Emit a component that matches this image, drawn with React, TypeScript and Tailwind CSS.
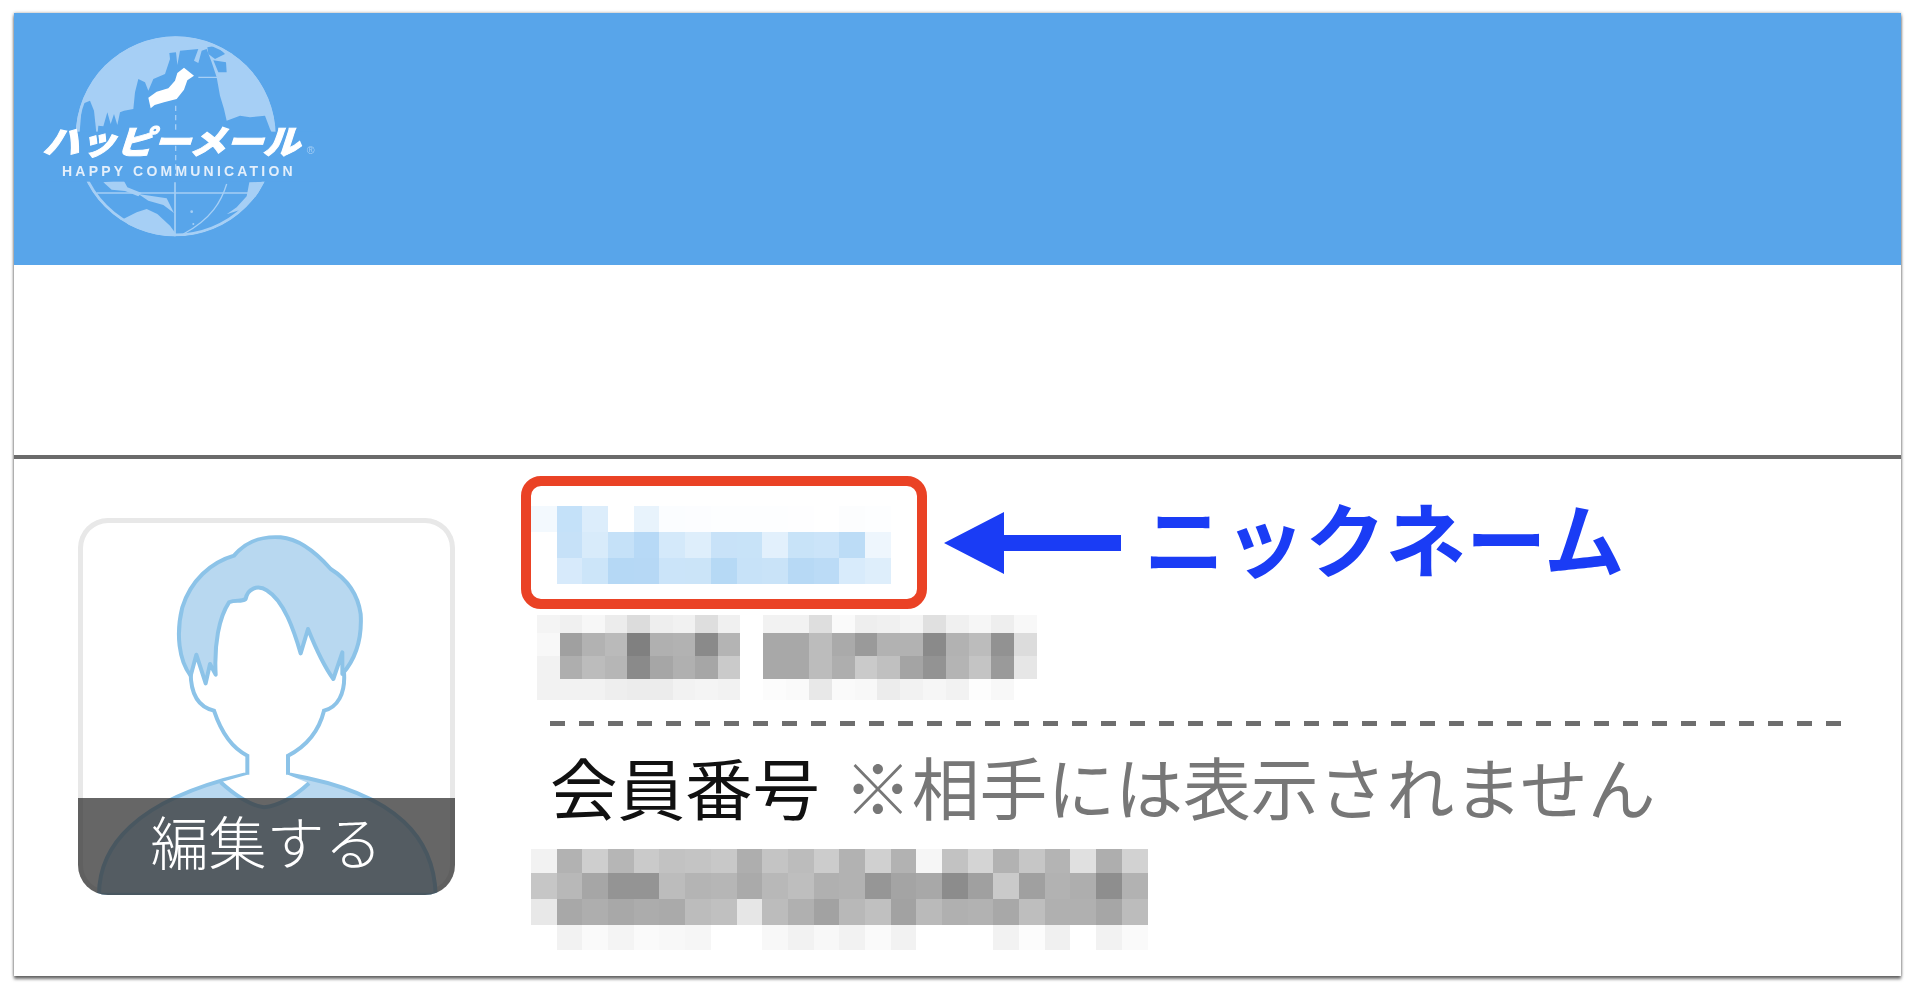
const blueRows = [
  ['#f3f9fe', '#c4e1f9', '#dcedfb', '#ffffff', '#e8f3fc', '#fbfdff', '#fcfdff', '#fdfeff', '#fdfeff', '#fdfeff', '#fefeff', '#ffffff', '#fcfdfe', '#fdfeff'],
  ['#ffffff', '#c6e1f8', '#d8ebfa', '#c5e1f8', '#b7d9f6', '#d4e9fa', '#deeefb', '#c8e2f8', '#c8e3f8', '#e2f0fc', '#c8e3f8', '#cbe4f9', '#bcdcf6', '#eef6fd'],
  ['#ffffff', '#d7eafb', '#cce5f9', '#b5d8f5', '#b6d8f5', '#cbe4f9', '#cbe4f8', '#b6d9f5', '#c7e2f8', '#c9e3f8', '#b7d9f5', '#bbdbf6', '#d8ebfb', '#deeefb'],
]

const grayRowsA = [
  ['#f4f4f4', '#f0f0f0', '#f7f7f7', '#ececec', '#dcdcdc', '#eeeeee', '#f1f1f1', '#dedede', '#f0f0f0'],
  ['#f8f8f8', '#a0a0a0', '#b2b2b2', '#bababa', '#808080', '#b0b0b0', '#b2b2b2', '#8a8a8a', '#b4b4b4'],
  ['#f2f2f2', '#aeaeae', '#bcbcbc', '#b6b6b6', '#8a8a8a', '#a6a6a6', '#b0b0b0', '#a6a6a6', '#cacaca'],
  ['#f2f2f2', '#f2f2f2', '#f2f2f2', '#eeeeee', '#ececec', '#ececec', '#f2f2f2', '#f4f4f4', '#f2f2f2'],
]

const grayRowsB = [
  ['#f2f2f2', '#f2f2f2', '#dedede', '#fafafa', '#eeeeee', '#f0f0f0', '#f4f4f4', '#e0e0e0', '#f0f0f0', '#f6f6f6', '#eeeeee', '#f8f8f8'],
  ['#a8a8a8', '#a8a8a8', '#bcbcbc', '#aaaaaa', '#9a9a9a', '#b2b2b2', '#b2b2b2', '#8a8a8a', '#b2b2b2', '#bcbcbc', '#929292', '#dcdcdc'],
  ['#a8a8a8', '#a8a8a8', '#bcbcbc', '#aeaeae', '#cacaca', '#c0c0c0', '#a4a4a4', '#939393', '#b4b4b4', '#c4c4c4', '#9a9a9a', '#e6e6e6'],
  ['#fcfcfc', '#fafafa', '#e8e8e8', '#fafafa', '#f8f8f8', '#ececec', '#f2f2f2', '#f6f6f6', '#f2f2f2', '#fdfdfd', '#f8f8f8', '#ffffff'],
]

const grayRowsC = [
  ['#f2f2f2', '#b2b2b2', '#cecece', '#b6b6b6', '#cacaca', '#c2c2c2', '#c4c4c4', '#c8c8c8', '#aeaeae', '#c4c4c4', '#bcbcbc', '#cccccc', '#b2b2b2', '#d0d0d0', '#b2b2b2', '#f6f6f6', '#c2c2c2', '#d4d4d4', '#b2b2b2', '#c6c6c6', '#b4b4b4', '#e0e0e0', '#aeaeae', '#d2d2d2'],
  ['#c6c6c6', '#b8b8b8', '#a6a6a6', '#949494', '#949494', '#bcbcbc', '#b4b4b4', '#b6b6b6', '#aaaaaa', '#b8b8b8', '#bebebe', '#b0b0b0', '#b2b2b2', '#969696', '#a4a4a4', '#a8a8a8', '#8c8c8c', '#a0a0a0', '#cacaca', '#a0a0a0', '#b2b2b2', '#aeaeae', '#8e8e8e', '#b2b2b2'],
  ['#e8e8e8', '#a8a8a8', '#aeaeae', '#a8a8a8', '#acacac', '#aaaaaa', '#bcbcbc', '#c0c0c0', '#e6e6e6', '#bcbcbc', '#b0b0b0', '#a2a2a2', '#b8b8b8', '#c0c0c0', '#a2a2a2', '#bababa', '#b0b0b0', '#b2b2b2', '#a8a8a8', '#bebebe', '#b0b0b0', '#b0b0b0', '#a6a6a6', '#bcbcbc'],
  ['#ffffff', '#f2f2f2', '#fafafa', '#f4f4f4', '#fafafa', '#f8f8f8', '#f6f6f6', '#ffffff', '#ffffff', '#f8f8f8', '#f2f2f2', '#f8f8f8', '#f2f2f2', '#fafafa', '#f2f2f2', '#ffffff', '#ffffff', '#ffffff', '#f2f2f2', '#fcfcfc', '#f0f0f0', '#ffffff', '#f2f2f2', '#fafafa'],
]

// a block of blurred-out text
function Mosaic({ rows, cell, heights }: { rows: string[][]; cell: number; heights: number[] }) {
  return (
    <div className="flex flex-col blur-[0.7px]">
      {rows.map((row, i) => (
        <div key={i} className="flex" style={{ height: heights[i] }}>
          {row.map((c, j) => (
            <div key={j} style={{ width: cell, backgroundColor: c }} />
          ))}
        </div>
      ))}
    </div>
  )
}

function Logo() {
  const land = '#a6cff5'
  const sea = '#58a5ea'
  return (
    <svg className="w-[280px] h-[214px] block blur-[0.4px]" viewBox="120 90 840 642">
      <defs>
        <clipPath id="globe">
          <circle cx="527" cy="412" r="300" />
        </clipPath>
      </defs>
      {/* upper half: land is the disc, the sea is cut out of it */}
      <g clipPath="url(#globe)">
        <rect x="200" y="100" width="660" height="310" fill={land} />
        <g transform="translate(210 90)" fill={sea}>
          <path d="M82 320 L85 290 L100 292 L112 250 L122 285 L132 255 L142 288 L150 250 L162 245 L190 240 L195 190 L205 150 L225 160 L235 185 L250 150 L285 135 L300 90 L298 72 L318 70 L322 108 L330 65 L385 60 L372 95 L385 102 L395 65 L410 60 L425 100 L440 145 L450 200 L462 240 L470 275 L510 260 L540 265 L585 260 L600 300 L610 320 Z" />
          <path d="M28 320 L36 225 L60 215 L72 245 L80 320 Z" />
          <path d="M412 55 L440 50 L465 75 L435 90 L415 75 Z" />
          <path d="M430 94 L468 100 L470 130 L445 130 Z" />
        </g>
        <path d="M595 235 H652" stroke={land} strokeWidth="4" fill="none" />
        <path d="M527 320 V400" stroke={land} strokeWidth="4" strokeDasharray="16 12" fill="none" />
      </g>
      {/* lower half: a ring with australia and the islands */}
      <g clipPath="url(#globe)">
        <circle cx="527" cy="412" r="296" fill="none" stroke={land} strokeWidth="9" />
        <g transform="translate(210 510)">
          <g fill={land}>
            <path d="M100 40 L160 32 L172 55 L215 72 L205 82 L165 66 L125 62 Z" />
            <path d="M205 75 L290 88 L312 132 L280 108 L235 95 Z" />
            <path d="M160 150 L200 130 L230 120 L262 135 L300 170 L316 192 L316 210 L200 200 Z" />
            <path d="M538 40 L582 38 L562 80 L512 122 L470 136 L500 115 L530 82 Z" />
            <circle cx="365" cy="128" r="4" />
            <circle cx="370" cy="165" r="3" />
          </g>
          <path d="M80 72 H540" stroke={land} strokeWidth="4" fill="none" />
          <path d="M315 40 V205" stroke={land} strokeWidth="5" fill="none" />
          <path d="M470 45 C455 95 425 150 340 195" stroke={land} strokeWidth="4" fill="none" />
        </g>
      </g>
      {/* band behind the wordmark */}
      <rect x="120" y="398" width="840" height="150" fill={sea} />
      <path d="M527 440 V530" stroke={land} strokeWidth="4" strokeDasharray="16 12" fill="none" />
      {/* japan */}
      <path
        fill="#ffffff"
        d="M445 296 L470 278 L505 268 L525 245 L532 222 L552 206 L582 230 L562 244 L552 272 L530 300 L492 310 L464 318 L452 328 Z"
      />
      <g transform="translate(127 465) skewX(-18)">
        <text
          x="0"
          y="0"
          textLength="772"
          lengthAdjust="spacingAndGlyphs"
          fill="#ffffff"
          stroke="#ffffff"
          strokeWidth="3"
          fontSize="100"
          fontWeight="900"
          fontFamily="'Noto Sans CJK JP', sans-serif"
        >
          ハッピーメール
        </text>
      </g>
      <text x="920" y="466" fill={land} fontSize="32" fontFamily="'Liberation Sans', sans-serif">
        ®
      </text>
      <text
        x="186"
        y="531"
        textLength="692"
        fill="#e3effb"
        fontSize="42"
        fontWeight="700"
        fontFamily="'Liberation Sans', sans-serif"
      >
        HAPPY COMMUNICATION
      </text>
    </svg>
  )
}

function Avatar() {
  return (
    <div className="relative w-[377px] h-[377px] rounded-[30px] bg-white shadow-[inset_0_0_0_5px_#e8e8e8] overflow-hidden shrink-0">
      <svg className="block w-[377px] h-[377px] blur-[0.4px]" viewBox="82 52 1131 1131">
        {/* shoulders */}
        <path
          d="M145 1182 C 145 1040 250 900 580 822 L 720 822 C 1050 880 1150 1020 1155 1182 Z"
          fill="#b8d8f0"
          stroke="#8cc3e8"
          strokeWidth="12"
        />
        {/* face and neck, open at the top where the hair sits */}
        <path
          d="M420 500 C 420 585 445 620 490 630 C 510 690 540 740 590 765 L590 822 L510 845 C 560 890 600 915 640 920 C 690 915 740 880 775 848 L712 822 L712 765 C 770 735 805 690 820 630 C 860 620 885 580 880 500 Z"
          fill="#ffffff"
          stroke="none"
        />
        <path
          d="M420 515 C 420 585 445 620 490 630 C 510 690 540 740 590 765 L590 822 M712 822 L712 765 C 770 735 805 690 820 630 C 860 620 885 580 880 515 M510 845 C 560 890 600 915 640 920 C 690 915 740 880 775 848"
          fill="none"
          stroke="#8cc3e8"
          strokeWidth="12"
        />
        <path
          d="M690 110 C 620 105 580 130 550 165 C 480 185 420 240 395 320 C 375 400 385 480 420 525 L437 462 L465 548 L478 490 L495 522 C 490 430 505 350 535 305 C 555 295 570 305 585 295 C 590 265 620 250 650 270 C 700 300 730 390 750 458 L772 385 C 790 430 815 490 848 535 L875 455 L875 520 C 910 480 935 420 930 340 C 920 270 880 230 840 205 C 800 160 750 115 690 110 Z"
          fill="#b8d8f0"
          stroke="#8cc3e8"
          strokeWidth="12"
          strokeLinejoin="round"
        />
      </svg>
      <div className="absolute left-0 right-0 bottom-0 h-[97px] bg-[#333333]/75 flex items-center justify-center">
        <span className="text-white text-[58px] leading-none font-['Noto_Sans_CJK_JP',sans-serif] font-light pb-[14px]">編集する</span>
      </div>
    </div>
  )
}

export default function App() {
  return (
    <div className="w-[1920px] h-[996px] bg-white pt-[13px] pl-[14px] overflow-hidden font-['Noto_Sans_CJK_JP',sans-serif]">
      <div className="w-[1887px] h-[963px] bg-white shadow-[0_3px_3px_rgba(0,0,0,0.55),0_0_3px_rgba(0,0,0,0.35)] flex flex-col">
        <div className="h-[252px] bg-[#58a5ea] pl-[26px] pt-[16px]">
          <Logo />
        </div>
        <div className="h-[194px] border-b-4 border-[#6b6b6b]" />
        <div className="flex pl-[64px]">
          <div className="pt-[59px]">
            <Avatar />
          </div>
          <div className="pl-[66px] pt-[17px] flex-1">
            <div className="flex items-center">
              <div className="w-[406px] h-[133px] border-[10px] border-[#ea4225] rounded-[20px] pt-[20px] bg-white overflow-hidden">
                <Mosaic rows={blueRows} cell={25.7} heights={[26, 26, 26]} />
              </div>
              {/* arrow to the nickname */}
              <svg className="ml-[17px] w-[177px] h-[62px]" viewBox="0 0 177 62">
                <path d="M0 31 L60 0 V23 H177 V39 H60 V62 Z" fill="#1a3cf5" />
              </svg>
              <span className="ml-[23px] mb-[12px] text-[#1a3cf5] text-[80.5px] leading-none font-bold">ニックネーム</span>
            </div>
            <div className="flex pt-[6px] pl-[16px] gap-[23px]">
              <Mosaic rows={grayRowsA} cell={22.6} heights={[18, 23, 23, 21]} />
              <Mosaic rows={grayRowsB} cell={22.8} heights={[18, 23, 23, 21]} />
            </div>
            <div className="ml-[29px] mt-[21px] w-[1295px] h-[5px] bg-[repeating-linear-gradient(90deg,#6e6e6e_0,#6e6e6e_15px,transparent_15px,transparent_29px)]" />
            <div className="ml-[29px] mt-[21px] flex items-center h-[78px] whitespace-nowrap">
              <span className="text-[#111111] text-[67.5px] leading-none">会員番号</span>
              <span className="ml-[24px] text-[#777777] text-[67.8px] leading-none">※相手には表示されません</span>
            </div>
            <div className="ml-[10px] mt-[24px]">
              <Mosaic rows={grayRowsC} cell={25.7} heights={[24, 26, 26, 25]} />
            </div>
          </div>
        </div>
      </div>
    </div>
  )
}
